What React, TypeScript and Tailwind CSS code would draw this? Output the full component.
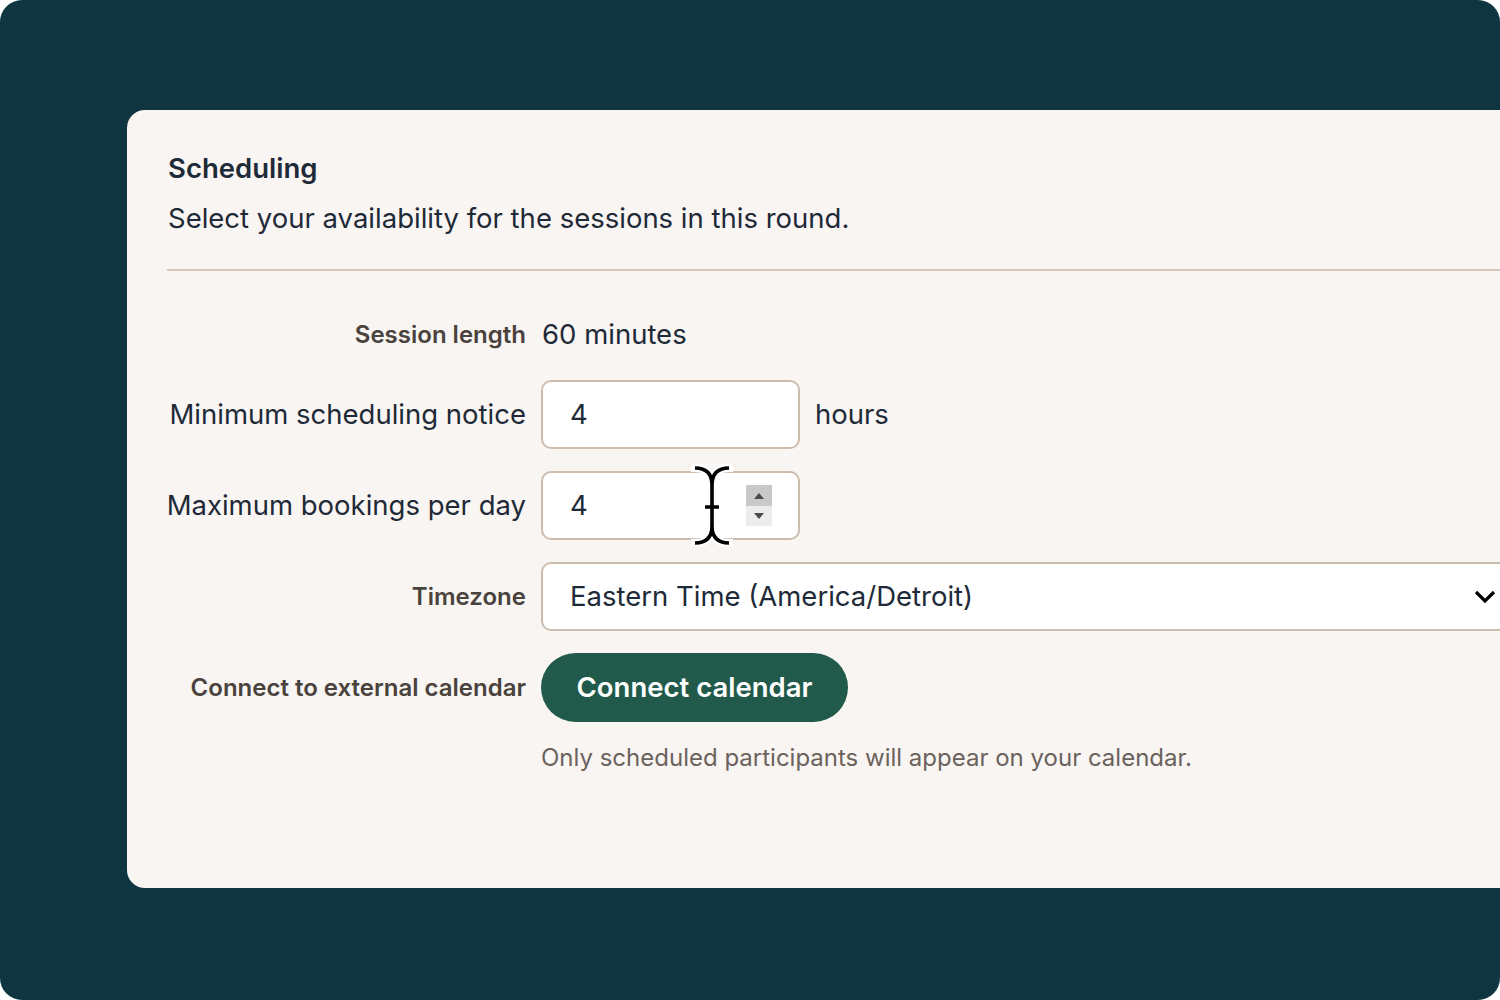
import React from "react";

function Cursor() {
  const d =
    "M5 5 Q22 5 22 22 M39 5 Q22 5 22 22 M22 22 L22 63 M22 63 Q22 80 5 80 M22 63 Q22 80 39 80 M15 44 L29 44";
  return (
    <svg
      width="44"
      height="85"
      viewBox="0 0 44 85"
      className="absolute left-[690px] top-[463px] pointer-events-none"
    >
      <path d={d} fill="none" stroke="#ffffff" strokeWidth="8" strokeLinecap="square" />
      <path d={d} fill="none" stroke="#000000" strokeWidth="3.6" strokeLinecap="butt" />
    </svg>
  );
}

function Label({ children, bold }: { children: React.ReactNode; bold?: boolean }) {
  return (
    <div className="w-[358px] shrink-0 flex justify-end">
      <span
        className={
          bold
            ? "whitespace-nowrap text-[24px] font-semibold text-[#4a423d]"
            : "whitespace-nowrap text-[27.5px] text-[#1e2a38]"
        }
      >
        {children}
      </span>
    </div>
  );
}

export default function App() {
  return (
    <div
      className="relative w-[1500px] h-[1000px] bg-white overflow-hidden"
      style={{ fontFamily: "Inter, 'Noto Sans', sans-serif" }}
    >
      <div className="w-full h-full bg-[#0f3640] rounded-[22px] overflow-hidden pt-[110px] pl-[127px]">
        <div className="w-[1420px] h-[778px] bg-[#f9f5f2] rounded-l-[18px] pl-[41px] pt-[150px] relative">
          <div className="absolute left-[41px] top-[40px] right-0">
            <h2 className="text-[27.5px] leading-[36px] font-semibold text-[#1e2a38]">
              Scheduling
            </h2>
            <p className="mt-[15px] text-[27.5px] leading-[34px] text-[#1e2a38]">
              Select your availability for the sessions in this round.
            </p>
          </div>
          <div className="absolute left-[40px] right-0 top-[159px] h-[2px] bg-[#d5c8bc]" />

          <div className="absolute left-[41px] top-[202px] flex flex-col">
            {/* Session length */}
            <div className="flex items-center h-[46px]">
              <Label bold>Session length</Label>
              <div className="ml-[16px] text-[27.5px] text-[#1e2a38]">60 minutes</div>
            </div>

            {/* Minimum scheduling notice */}
            <div className="flex items-center mt-[22px]">
              <Label>Minimum scheduling notice</Label>
              <div className="ml-[15px] w-[259px] h-[69px] rounded-[10px] border-2 border-[#cdbdaf] bg-white flex items-center pl-[27px] text-[27.5px] text-[#1e2a38]">
                4
              </div>
              <div className="ml-[15px] text-[27.5px] text-[#1e2a38]">hours</div>
            </div>

            {/* Maximum bookings */}
            <div className="flex items-center mt-[22px]">
              <Label>Maximum bookings per day</Label>
              <div className="ml-[15px] w-[259px] h-[69px] rounded-[10px] border-2 border-[#cdbdaf] bg-white flex items-center pl-[27px] pr-[26px] text-[27.5px] text-[#1e2a38]">
                <span className="flex-1">4</span>
                <div className="flex flex-col w-[26px]">
                  <div className="h-[21px] bg-[#c9c9c9] flex items-center justify-center">
                    <div className="w-0 h-0 border-l-[5px] border-r-[5px] border-b-[6px] border-l-transparent border-r-transparent border-b-[#4a4a4a]" />
                  </div>
                  <div className="h-[20px] bg-[#ececec] flex items-center justify-center">
                    <div className="w-0 h-0 border-l-[5px] border-r-[5px] border-t-[6px] border-l-transparent border-r-transparent border-t-[#4a4a4a]" />
                  </div>
                </div>
              </div>
            </div>

            {/* Timezone */}
            <div className="flex items-center mt-[22px]">
              <Label bold>Timezone</Label>
              <div className="ml-[15px] w-[980px] h-[69px] rounded-[10px] border-2 border-[#cdbdaf] bg-white flex items-center pl-[27px] pr-[23px] text-[27.5px] text-[#1e2a38]">
                <span className="flex-1">Eastern Time (America/Detroit)</span>
                <svg width="22" height="14" viewBox="0 0 22 14">
                  <path d="M2 2 L11 11 L20 2" fill="none" stroke="#000" strokeWidth="3.2" />
                </svg>
              </div>
            </div>

            {/* Connect */}
            <div className="flex items-center mt-[22px]">
              <Label bold>Connect to external calendar</Label>
              <button className="ml-[15px] w-[307px] h-[69px] rounded-full bg-[#215a4b] text-white text-[27.5px] font-semibold flex items-center justify-center">
                Connect calendar
              </button>
            </div>
            <div className="ml-[373px] mt-[18px] text-[24px] text-[#6b625d]">
              Only scheduled participants will appear on your calendar.
            </div>
          </div>
        </div>
      </div>
      <Cursor />
    </div>
  );
}
